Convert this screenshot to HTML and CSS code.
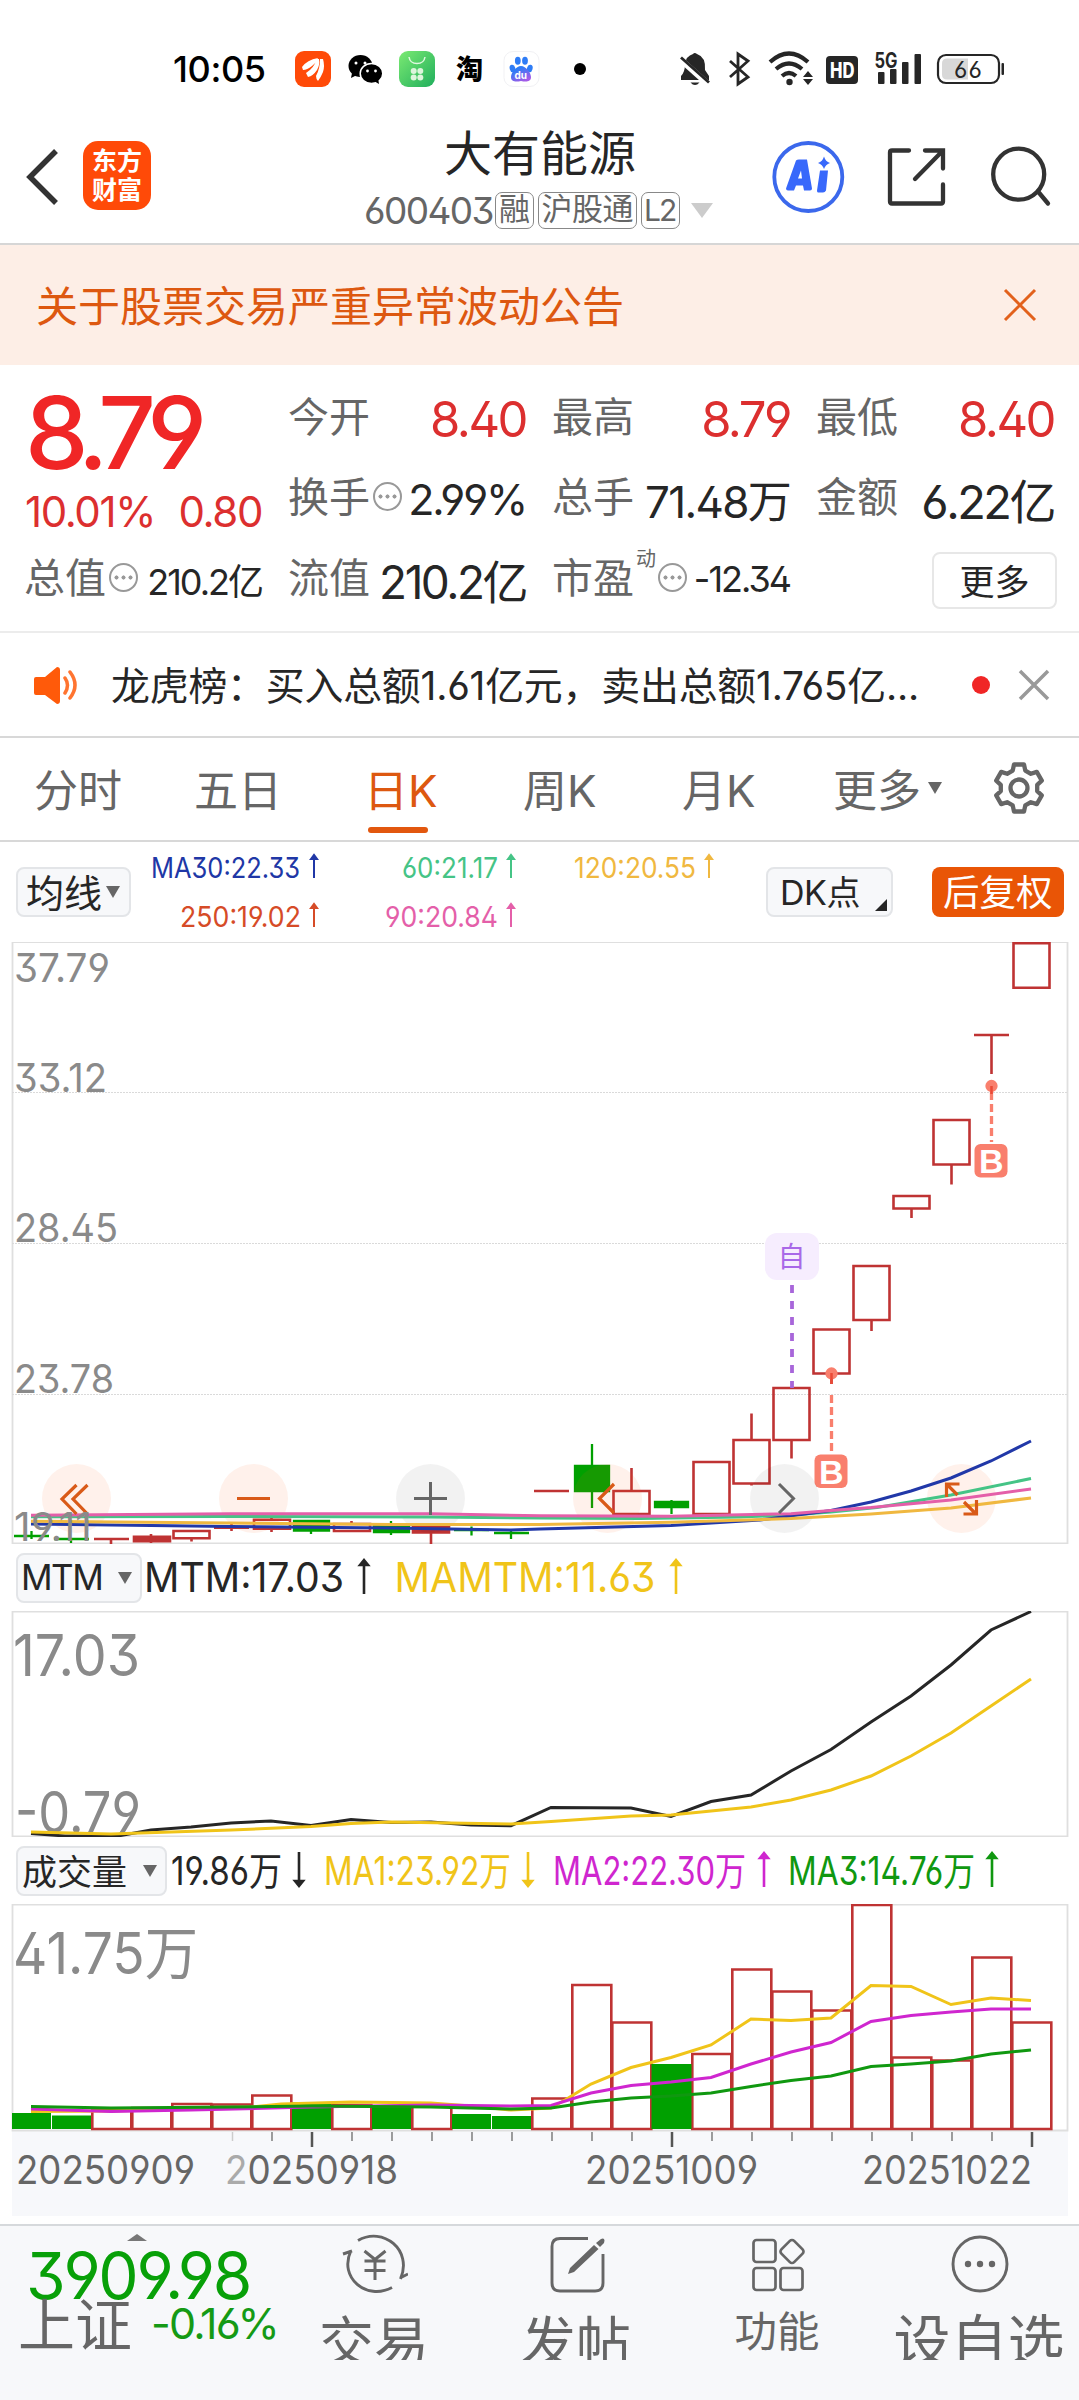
FILE: index.html
```html
<!DOCTYPE html>
<html lang="zh-CN">
<head>
<meta charset="utf-8">
<title>大有能源 600403</title>
<link rel="stylesheet" href="styles.css">
</head>
<body>
<div class="status-bar">
  <span class="clock">10:05</span>
  <svg class="status-apps" width="310" height="48" viewBox="290 45 310 48">
    <defs>
      <linearGradient id="green" x1="0" y1="0" x2="1" y2="1"><stop offset="0" stop-color="#7bea72"/><stop offset="1" stop-color="#1fae5c"/></linearGradient>
      <linearGradient id="paw" x1="0" y1="0" x2="0.6" y2="1"><stop offset="0.3" stop-color="#2e7cf6"/><stop offset="1" stop-color="#a35be8"/></linearGradient>
    </defs>
    <rect x="295" y="51" width="36" height="36" rx="9" fill="#ff4a08"/>
    <path d="M302 67q5-7 16-9-2 5-6 8-5 4-9 4zM306 73q8-5 11-14l2 0q1 6-2 11-4 6-9 7zM318 81q-2-2-2-5 4-7 4-17l3 0q2 7 0 13-2 5-5 9z" fill="#fff"/>
    <ellipse cx="360.500" cy="66" rx="12" ry="11" fill="#000"/><path d="M352 73l-1 5 6-3z" fill="#000"/>
    <ellipse cx="371.500" cy="73.500" rx="11.300" ry="10" fill="#000" stroke="#fff" stroke-width="1.500"/><path d="M374 81l5 3-1-6z" fill="#000"/>
    <g fill="#fff"><circle cx="356" cy="63" r="1.500"/><circle cx="365" cy="63" r="1.500"/><circle cx="367.500" cy="71" r="1.400"/><circle cx="375.500" cy="71" r="1.400"/></g>
    <rect x="399" y="51" width="36" height="36" rx="9" fill="url(#green)"/>
    <path d="M409 57q1 6.500 8 6.500t8-6.500" fill="none" stroke="#dff8df" stroke-width="1.500"/>
    <g fill="#dcf5dc"><circle cx="413.700" cy="71" r="3"/><circle cx="420.300" cy="71" r="3"/><circle cx="413.700" cy="77.500" r="3"/><circle cx="420.300" cy="77.500" r="3"/></g>
    <text x="456" y="78.500" font-size="27" font-weight="900" textLength="27">淘</text>
    <rect x="504" y="51.500" width="35" height="35" rx="9" fill="#fff" stroke="#f1f1f4"/>
    <g fill="#2e7cf6"><ellipse cx="512.500" cy="68.500" rx="2.800" ry="3.800" transform="rotate(-15 512.500 68.500)"/><ellipse cx="517.800" cy="60.800" rx="2.900" ry="4"/><ellipse cx="525" cy="60.800" rx="2.900" ry="4"/><ellipse cx="529.800" cy="68.500" rx="2.800" ry="3.800" transform="rotate(15 529.800 68.500)"/></g>
    <path d="M521 66c5 0 10 7 10 11 0 5-5 5-10 4-5 1-10 1-10-4 0-4 5-11 10-11z" fill="url(#paw)"/>
    <text x="514.500" y="79" font-size="10" font-weight="700" fill="#fff">du</text>
    <circle cx="580" cy="69" r="6" fill="#000"/>
  </svg>
  <svg class="status-signals" width="335" height="48" viewBox="675 45 335 48" fill="#262626">
    <path d="M693 54q1.500-2 4 0 9 3 8 16l4 6v4h-28v-4q4-4 4-12 1-8 8-10z"/><path d="M690.500 82.500h9q-4.500 5-9 0z"/>
    <path d="M680 59l29 26" stroke="#fff" stroke-width="6"/><path d="M681 57.500l28 25" stroke="#262626" stroke-width="2.800"/>
    <path d="M730 61l18 16-10 7V54l10 7-18 16" fill="none" stroke="#262626" stroke-width="2.800"/>
    <g fill="none" stroke="#262626" stroke-width="4.200"><path d="M770 62q19-17 38 0"/><path d="M776 69q13-11 26 0"/><path d="M782 76q7-6 14 0"/></g>
    <circle cx="789.500" cy="82" r="3.200"/><path d="M808 71l5 6h-10zM808 85l-5-6h10z"/>
    <rect x="826" y="56" width="32" height="28" rx="4"/><text x="830" y="77.500" font-size="21" font-weight="800" fill="#fff" textLength="24.500" lengthAdjust="spacingAndGlyphs">HD</text>
    <text x="874.500" y="67.500" font-size="21" font-weight="700" textLength="23" lengthAdjust="spacingAndGlyphs" fill="#262626">5G</text>
    <rect x="878" y="72" width="6.500" height="12" rx="1"/><rect x="890" y="69" width="6.500" height="15" rx="1"/><rect x="902" y="62" width="6.500" height="22" rx="1"/><rect x="914.500" y="54" width="6.500" height="30" rx="1"/>
    <rect x="938" y="55" width="61" height="28" rx="8" fill="#fff" stroke="#262626" stroke-width="2.200"/><path d="M947 58.500h21v21h-21q-5 0-5-5v-11q0-5 5-5z" fill="#d8d8d8"/><rect x="1001.500" y="63" width="2.500" height="12" rx="1"/>
    <text x="954" y="78" font-size="23" font-weight="400" textLength="28">66</text>
  </svg>
</div>

<header class="header">
  <svg class="back" width="36" height="60" viewBox="25 147 36 60"><path d="M56 152L30 178 56 204" fill="none" stroke="#333" stroke-width="5.500"/></svg>
  <div class="logo">东方<br>财富</div>
  <div class="title">
    <h1>大有能源</h1>
    <div class="code"><span class="code-number">600403</span><span class="tag">融</span><span class="tag">沪股通</span><span class="tag latin">L2</span><i class="triangle light"></i></div>
  </div>
  <svg class="header-icons" width="290" height="80" viewBox="770 136.500 290 80" fill="none">
    <circle cx="808.300" cy="177.500" r="34" stroke="#3b68ec" stroke-width="3.800"/>
    <path d="M786 189l10-28q1-1 3-1h8l5 29q0 2-2 2h-6l-1-5h-7l-2 5h-6q-2 0-2-2zM798 179h4l-1-8zM820 171h8l-2 20q-1 2-3 2h-5q-1 0-1-2z" fill="#3868fb" fill-rule="evenodd"/>
    <path d="M824 157q1.500 5 6 6.500-4.500 1.500-6 6-1.500-4.500-6-6 4.500-1.500 6-6.500z" fill="#3868fb"/>
    <g stroke="#333" stroke-width="4.300" stroke-linecap="round"><path d="M909 151h-17q-2 0-2 2v49q0 2 2 2h49q2 0 2-2v-17M925 151h18v18M942 152l-27 27.500"/><circle cx="1018.700" cy="174.700" r="25.500"/><path d="M1038 192l10 12"/></g>
  </svg>
</header>

<div class="banner"><span>关于股票交易严重异常波动公告</span>
  <svg width="34" height="34" viewBox="0 0 34 34"><path d="M2 2l30 30M32 2L2 32" stroke="#e2611c" stroke-width="3"/></svg>
</div>

<section class="quote">
  <div class="price-block">
    <div class="price">8.79</div>
    <div class="change"><span>10.01%</span><span>0.80</span></div>
  </div>
  <div class="cell"><label>今开</label><b class="up">8.40</b></div>
  <div class="cell"><label>最高</label><b class="up">8.79</b></div>
  <div class="cell"><label>最低</label><b class="up">8.40</b></div>
  <div class="cell"><label>换手</label><i class="info"></i><b class="size-43">2.99%</b></div>
  <div class="cell"><label>总手</label><b class="size-44">71.48万</b></div>
  <div class="cell"><label>金额</label><b class="size-47">6.22亿</b></div>
  <div class="cell"><label>总值</label><i class="info"></i><b class="size-36">210.2亿</b></div>
  <div class="cell"><label>流值</label><b class="size-46">210.2亿</b></div>
  <div class="cell"><label>市盈<sup>动</sup></label><i class="info shifted"></i><b class="size-36">-12.34</b></div>
  <div class="cell cell-more"><button class="more">更多</button></div>
</section>

<div class="news">
  <svg width="46" height="40" viewBox="0 0 46 40"><path d="M2 12h9L23 2q3 0 3 3v31q0 3-3 3L11 30H2q-2 0-2-2V14q0-2 2-2z" fill="#ff5a0a"/><path d="M31 13q5 7 0 15M36 7q10 13 0 26" fill="none" stroke="#ff7430" stroke-width="3.500" stroke-linecap="round"/></svg>
  <span class="news-text">龙虎榜：买入总额1.61亿元，卖出总额1.765亿...</span>
  <i class="dot"></i>
  <svg width="32" height="32" viewBox="0 0 32 32"><path d="M2 2l28 28M30 2L2 30" stroke="#999" stroke-width="3.500"/></svg>
</div>

<nav class="tabs">
  <span class="tab">分时</span><span class="tab">五日</span><span class="tab active">日K</span><span class="tab">周K</span><span class="tab">月K</span><span class="tab">更多<i class="triangle small"></i></span>
  <svg class="gear" width="56" height="56" viewBox="-28 -28 56 56" fill="none" stroke="#666" stroke-width="4.300" stroke-linejoin="round"><path d="M-5-23.500H5L6.300-17.400 11.900-14.200 17.800-16.100 22.800-7.400 18.200-3.200V3.200L22.800 7.400 17.800 16.100 11.900 14.200 6.300 17.400 5 23.500H-5L-6.300 17.400-11.900 14.200-17.800 16.100-22.800 7.400-18.200 3.200V-3.200L-22.800-7.400-17.800-16.100-11.900-14.200-6.300-17.400Z"/><circle r="8.500"/></svg>
</nav>

<div class="ma-row">
  <button class="chip chip-ma"><span>均线</span><i class="triangle small"></i></button>
  <svg class="ma-legend" width="580" height="100" viewBox="146 842 580 100" font-size="29">
    <g fill="#2037a6" stroke="#2037a6"><text x="151" y="878" textLength="149" lengthAdjust="spacingAndGlyphs">MA30:22.33</text><path class="arrow" d="M314 878v-22m-3 3l3-4 3 4z"/></g>
    <g fill="#45c486" stroke="#45c486"><text x="402" y="878" textLength="96" lengthAdjust="spacingAndGlyphs">60:21.17</text><path class="arrow" d="M511 878v-22m-3 3l3-4 3 4z"/></g>
    <g fill="#f0b840" stroke="#f0b840"><text x="574" y="878" textLength="122" lengthAdjust="spacingAndGlyphs">120:20.55</text><path class="arrow" d="M709 878v-22m-3 3l3-4 3 4z"/></g>
    <g fill="#d64b27" stroke="#d64b27"><text x="180" y="927" textLength="121" lengthAdjust="spacingAndGlyphs">250:19.02</text><path class="arrow" d="M314 927v-22m-3 3l3-4 3 4z"/></g>
    <g fill="#e45fa9" stroke="#e45fa9"><text x="385" y="927" textLength="113" lengthAdjust="spacingAndGlyphs">90:20.84</text><path class="arrow" d="M511 927v-22m-3 3l3-4 3 4z"/></g>
  </svg>
  <button class="chip chip-dk"><span>DK点</span><i class="corner"></i></button>
  <button class="chip chip-adjust"><span>后复权</span></button>
</div>

<svg class="chart" width="1079" height="602" viewBox="0 942 1079 602">
  <path class="frame" d="M12.500 942H1067.500V1543.500H12.500Z"/>
  <path d="M12 1092.500H1067M12 1243.500H1067M12 1394.500H1067" stroke="#dadada" stroke-dasharray="2 1"/>
  <g fill="#8a8a8a" font-size="39">
    <text x="14" y="982" textLength="96" lengthAdjust="spacingAndGlyphs">37.79</text><text x="14" y="1092" textLength="93" lengthAdjust="spacingAndGlyphs">33.12</text><text x="14" y="1242" textLength="104" lengthAdjust="spacingAndGlyphs">28.45</text><text x="14" y="1393" textLength="100" lengthAdjust="spacingAndGlyphs">23.78</text>
  </g>
  <g class="candle-up">
    <path d="M94 1539h35M111 1539v6"/><path d="M134 1536.700h36v4.600h-36zM151 1534v9" fill="#bf3333"/><path d="M173.500 1531h36v7.300h-36zM191.500 1538v3.500"/>
    <path d="M214 1527.700h35M231.500 1524v7"/><path d="M254 1519.700h36v9h-36zM271.500 1518v2M271.500 1529v3"/><path d="M334 1524h36v7h-36zM351.500 1521v3"/><path d="M413 1526.500h36v6h-36z" fill="#bf3333"/><path d="M431 1532v13"/>
    <path d="M534 1491h35"/><path d="M613.500 1491h36v23h-36zM631.500 1468v23M631.500 1514v5"/><path d="M693.500 1462h36v52h-36z"/><path d="M733.500 1440h36v43.500h-36zM751.500 1413.500V1440M751.500 1483v2.500"/><path d="M773.500 1388h36v52h-36zM791.500 1440v18.500"/><path d="M813.500 1329.500h36v44h-36zM831.500 1373.500v10.500"/><path d="M853.500 1266h36v54h-36zM871.500 1320v11"/><path d="M893.500 1196h36v12.500h-36zM911.500 1208v10"/><path d="M933.500 1120h36v44.500h-36zM951.500 1164v20.500"/><path d="M974 1035h35M991.500 1035v39"/><path d="M1013.500 943.200h36v44.500h-36z"/>
  </g>
  <g stroke="#00a000" stroke-width="2.300" fill="#00a000"><path d="M14 1536h35M31.500 1531v8M54 1539h35M71 1538v5M294 1521h35v9.500h-35zM311 1520v14M374 1525h35v7h-35zM391 1521v14M454 1530h35M471.500 1526.500v9M494 1533h35M511 1531v8M575 1466h34v25h-34zM592 1444v64M655 1502h33v5h-33zM671.500 1500v14"/></g>
  <g stroke="#f97f6d" stroke-width="3.300" fill="#f97f6d"><path d="M991.500 1092v50M831.500 1395v60" stroke-dasharray="8 4"/><circle cx="991.500" cy="1086" r="4.500"/><circle cx="831.500" cy="1373.500" r="4.500"/></g>
  <path d="M991.500 1086v8M831.500 1373v11" stroke="#ea4a36" stroke-width="2.500"/>
  <path d="M792 1285v103" stroke="#a866da" stroke-width="3.800" stroke-dasharray="8 8"/>
  <rect x="765" y="1233" width="54" height="47" rx="12" fill="#f6edfe"/><text x="777.500" y="1267" font-size="28" fill="#a968e8">自</text>
  <g fill="#f97f6d"><rect x="974.500" y="1144" width="33" height="33.500" rx="6"/><rect x="814.500" y="1454.500" width="33" height="33.500" rx="6"/></g>
  <g font-family="Liberation Sans" font-size="34" font-weight="700" fill="#fff"><text x="979" y="1173">B</text><text x="819" y="1483.500">B</text></g>
  <g fill="#ff5a14" fill-opacity=".085"><circle cx="76.500" cy="1498.500" r="34.500"/><circle cx="253.500" cy="1498.500" r="34.500"/><circle cx="607.500" cy="1498.500" r="34.500"/><circle cx="961.500" cy="1498.500" r="34.500"/></g>
  <g fill="#000" fill-opacity=".05"><circle cx="430.500" cy="1498.500" r="34.500"/><circle cx="784.500" cy="1498.500" r="34.500"/></g>
  <g fill="none" stroke-width="3">
    <path d="M31 1516.800L231 1516.500 431 1517 540 1518 640 1518.500 740 1517 791 1515 831 1512 877 1507.500 951 1495 1031 1478.500" stroke="#45c486"/>
    <path d="M31 1524L231 1526.500 391 1528 511 1530 540 1529 671 1525.500 760 1520 831 1510.500 871 1502 911 1491 951 1478 991 1461 1031 1441" stroke="#2138a8"/>
    <path d="M31 1521.300L231 1523 391 1524.500 540 1524.500 671 1522.300 791 1518.600 871 1514 951 1508 1031 1498" stroke="#f0b840"/>
    <path d="M31 1515.300L231 1513.800 431 1513.800 540 1515.700 671 1516.300 791 1513.700 831 1510.400 871 1507.600 951 1500 1031 1489" stroke="#e45fa9"/>
  </g>
  <g fill="none" stroke="#d95a18" stroke-width="3.200"><path d="M76.500 1485l-14.500 14 14.500 15M87.500 1485l-14.500 14 14.500 15M237 1498.500h33M614 1484l-14.500 14.500L614 1513M959.500 1484h-13v13M946.500 1484l11 11M964 1502l12 12M976.500 1500v14h-13"/></g>
  <path d="M414 1498.500h33M430.500 1482v33M779 1484l14.500 14.500L779 1513" fill="none" stroke="#666" stroke-width="3"/>
  <text x="14" y="1541" font-size="39" fill="#8a8a8a" textLength="78" lengthAdjust="spacingAndGlyphs">19.11</text>
</svg>

<div class="indicator-row">
  <button class="chip chip-mtm"><span>MTM</span><i class="triangle small"></i></button>
  <svg class="legend" width="920" height="67" viewBox="141 1544 920 67" font-size="41">
    <g fill="#262626" stroke="#262626"><text x="143" y="1592" textLength="200" lengthAdjust="spacingAndGlyphs">MTM:17.03</text><path class="arrow big" d="M363 1594v-33m-4 4l4-5 4 5z"/></g>
    <g fill="#f0c419" stroke="#f0c419"><text x="393.500" y="1592" textLength="261" lengthAdjust="spacingAndGlyphs">MAMTM:11.63</text><path class="arrow big" d="M675 1594v-33m-4 4l4-5 4 5z"/></g>
  </svg>
</div>

<svg class="chart" width="1079" height="226" viewBox="0 1611 1079 226">
  <path class="frame" d="M12.500 1611.500H1067.500V1836.500H12.500Z"/>
  <g fill="#8a8a8a" font-size="57"><text x="13" y="1676" textLength="127" lengthAdjust="spacingAndGlyphs">17.03</text><text x="15" y="1833" textLength="126" lengthAdjust="spacingAndGlyphs">-0.79</text></g>
  <g fill="none" stroke-width="3">
    <path d="M31 1833.500L65 1836 118 1836 151 1830 191 1827 231 1823 271 1821 311 1825.500 351 1819.500 391 1822.500 431 1822 471 1825 511 1825.700 551 1807.500 631 1808 671 1816.500 711 1801.500 751 1795 791 1771 831 1749.500 871 1722 911 1696 951 1665 991 1630 1031 1611.500" stroke="#262626"/>
    <path d="M31 1832L111 1834 231 1830 311 1826.500 351 1823.500 391 1822 511 1824 551 1821.500 631 1816 671 1815 711 1811 751 1807 791 1800 831 1790 871 1776 911 1756 951 1733 991 1706 1031 1679" stroke="#f0c419"/>
  </g>
</svg>

<div class="indicator-row">
  <button class="chip chip-volume"><span>成交量</span><i class="triangle small"></i></button>
  <svg class="legend" width="880" height="67" viewBox="167 1837 880 67" font-size="39">
    <g fill="#262626" stroke="#262626"><text x="171" y="1885" textLength="111" lengthAdjust="spacingAndGlyphs">19.86万</text><path class="arrow big" d="M299 1852v33m-4-4l4 5 4-5z"/></g>
    <g fill="#f0c419" stroke="#f0c419"><text x="324" y="1885" textLength="187" lengthAdjust="spacingAndGlyphs">MA1:23.92万</text><path class="arrow big" d="M528 1852v33m-4-4l4 5 4-5z"/></g>
    <g fill="#cf26cf" stroke="#cf26cf"><text x="553" y="1885" textLength="193" lengthAdjust="spacingAndGlyphs">MA2:22.30万</text><path class="arrow big" d="M764 1887v-33m-4 4l4-5 4 5z"/></g>
    <g fill="#109810" stroke="#109810"><text x="788" y="1885" textLength="187" lengthAdjust="spacingAndGlyphs">MA3:14.76万</text><path class="arrow big" d="M992 1887v-33m-4 4l4-5 4 5z"/></g>
  </svg>
</div>

<svg class="chart" width="1079" height="312" viewBox="0 1904 1079 312">
  <rect x="12" y="2131" width="1056" height="85" fill="#f7f8fb"/>
  <path class="frame" d="M12.500 1904.500H1067.500V2130.500H12.500Z"/>
  <text x="13" y="1974" font-size="57" fill="#8a8a8a" textLength="185" lengthAdjust="spacingAndGlyphs">41.75万</text>
  <path class="candle-up" d="M92.300 2109.500h39v19.500h-39zM132.300 2108h39v21h-39zM172.300 2104h39v25h-39zM212.300 2104.500h39v24.500h-39zM252.300 2095.500h39v33.500h-39zM332.300 2105h39v24h-39zM412.300 2105.500h39v23.500h-39zM532.300 2098.500h39v30.500h-39zM572.300 1985h39v144h-39zM612.300 2022.500h39v106.500h-39zM692.300 2054h39v75h-39zM732.300 1969.500h39v159.500h-39zM772.300 1991.500h39v137.500h-39zM812.300 2010.500h39v118.500h-39zM852.300 1905h39v224h-39zM892.300 2057.500h39v71.500h-39zM932.300 2060.500h39v68.500h-39zM972.300 1957.500h39v171.500h-39zM1012.300 2022.500h39v106.500h-39z"/>
  <path d="M12 2113h39v16H12zM52 2115.500h39v13.500h-39zM292 2102.500h39v26.500h-39zM372 2106h39v23h-39zM452 2114h39v15h-39zM492 2116h39v13h-39zM651.500 2064h40v65h-40z" fill="#00a000"/>
  <g fill="none" stroke-width="3">
    <path d="M31 2111.500L111 2111 191 2109 251 2107 281 2104 351 2102 431 2103 471 2106 511 2110 551 2108 565 2100 591 2084 631 2067.500 671 2057.500 711 2045 751 2019 791 2020.500 831 2018 871 1985.500 911 1986.500 951 2004.500 991 1998 1031 2000.500" stroke="#f0c419"/>
    <path d="M31 2109L111 2111.500 191 2110 311 2107 431 2105 511 2106 551 2105.500 591 2093 631 2085.500 671 2082 711 2077.500 751 2064 791 2052 831 2042.500 871 2021.500 911 2015.500 951 2012 991 2009 1031 2009" stroke="#cf26cf"/>
    <path d="M31 2106.500L111 2108 231 2107 311 2106 431 2107 511 2109 551 2108 591 2102 631 2098 671 2096 711 2093 751 2086.500 791 2080.500 831 2076 871 2066.500 911 2064 951 2061 991 2054 1031 2050" stroke="#109810"/>
  </g>
  <path d="M232.500 2132v9" stroke="#ccc" stroke-width="1.500"/>
  <path d="M272 2132v9m80-9v9m40-9v9m40-9v9m40-9v9m40-9v9m40-9v9m40-9v9m40-9v9m80-9v9m40-9v9m40-9v9m40-9v9m40-9v9m40-9v9m40-9v9m40-9v9" stroke="#8c8c8c" stroke-width="1.700"/>
  <path d="M312 2132v15m360-15v15m360-15v15" stroke="#555" stroke-width="2.500"/>
  <g fill="#666" font-size="39"><text x="16" y="2183.500" textLength="179" lengthAdjust="spacingAndGlyphs">20250909</text><text x="225" y="2183.500" textLength="173" lengthAdjust="spacingAndGlyphs"><tspan fill="#aaa">2</tspan>0250918</text><text x="585" y="2183.500" textLength="173" lengthAdjust="spacingAndGlyphs">20251009</text><text x="862" y="2183.500" textLength="170" lengthAdjust="spacingAndGlyphs">20251022</text></g>
</svg>

<footer class="bottom-bar">
  <div class="index">
    <i class="triangle upward"></i>
    <div class="index-value">3909.98</div>
    <div class="index-line"><span class="index-name">上证</span><span class="index-change">-0.16%</span></div>
  </div>
  <div class="action"><svg width="66" height="60" viewBox="-33 -30 66 60" fill="none" stroke="#666" stroke-width="2.900"><path d="M-17-23.500C8-38 38-14 25.500 15M25 14l8-4M17 23.500C-8 37-37 14-24-13.500M-32-10l9-3"/><path d="M-10.500-13L0-4.500 10.500-13M-10.500-3h21M-10.500 6.500h21M0-4V16" stroke-width="3"/></svg><span>交易</span></div>
  <div class="action"><svg width="60" height="60" viewBox="-30 -30 60 60" fill="none"><path d="M11-25.500H-17q-8 0-8 8V19q0 8 8 8H18q8 0 8-8V-10" stroke="#666" stroke-width="2.900"/><path d="M-9 10l2-6L17-19l4.500 4L-3 8zM19-21l5-4q2-1 3 0t0 4l-4 4z" fill="#666"/></svg><span>发帖</span></div>
  <div class="action small-text"><svg width="60" height="60" viewBox="-30 -30 60 60" fill="none" stroke="#666" stroke-width="2.700"><rect x="-24.500" y="-24" width="22" height="22" rx="3"/><rect x="-24.500" y="4" width="22" height="22" rx="3"/><rect x="2.500" y="4" width="22" height="22" rx="3"/><rect x="5" y="-21.500" width="18" height="18" rx="3" transform="rotate(45 14 -12.500)"/></svg><span>功能</span></div>
  <div class="action wide"><svg width="60" height="60" viewBox="-30 -30 60 60"><circle r="27" fill="none" stroke="#666" stroke-width="2.900"/><g fill="#666"><circle cx="-12" r="3.200"/><circle r="3.200"/><circle cx="12" r="3.200"/></g></svg><span>设自选</span></div>
</footer>
</body>
</html>
```

FILE: styles.css
```css
* { box-sizing: border-box; }
body {
  margin: 0;
  width: 1079px;
  height: 2400px;
  overflow: hidden;
  background: #fff;
  color: #262626;
  font-family: Inter, "Noto Sans CJK SC", sans-serif;
  font-feature-settings: "ss01", "cv09";
  font-weight: 400;
}
svg { display: block; flex: none; }
svg text { stroke: none; }
button { font: inherit; color: inherit; margin: 0; padding: 0; }
h1 { margin: 0; font-weight: 400; }
.triangle { display: inline-block; flex: none; border-style: solid; border-color: #666 transparent; border-width: 12px 7.5px 0; }
.triangle.light { border-color: #ccc transparent; border-width: 15px 11px 0; }
.triangle.upward { border-color: #777 transparent; border-width: 0 10.5px 7px; }
.arrow { stroke-width: 2; }
.arrow.big { stroke-width: 2.600; }
.frame { fill: none; stroke: #dfdfdf; stroke-width: 1.800; }
.candle-up { fill: none; stroke: #bf3333; stroke-width: 2.600; }

.status-bar { height: 123px; padding: 45px 69px 0 173px; display: flex; }
.clock { width: 117px; line-height: 49px; font-size: 36px; font-weight: 500; color: #000; letter-spacing: -.4px; }
.status-signals { margin-left: auto; }

.header { height: 122px; padding: 0 19px 15px 25px; border-bottom: 2px solid #d6d6d6; display: flex; align-items: center; }
.logo { width: 68px; height: 69px; margin-left: 22px; padding-top: 6px; border-radius: 15px; background: #ff4a08; color: #fff; font-size: 25px; line-height: 29px; font-weight: 700; text-align: center; }
.title { width: 400px; margin-left: 213px; margin-top: 9px; }
.title h1 { font-size: 48px; line-height: 62px; padding-left: 80px; }
.code { display: flex; align-items: center; height: 54px; font-size: 37px; color: #666; margin-top: -2px; }
.code-number { width: 131px; letter-spacing: -1.600px; }
.tag { border: 1.500px solid #888; border-radius: 7px; height: 37px; padding: 0 3px; margin-right: 4px; font-size: 31px; line-height: 31px; letter-spacing: -.5px; }
.tag.latin { width: 39px; padding: 0 2px; line-height: 34px; letter-spacing: -2px; font-size: 30px; }
.triangle.light { margin-left: 7px; }
.header-icons { margin-left: auto; }

.banner { height: 120px; padding: 0 42px 0 36px; background: #fdeee6; color: #dd5810; font-size: 42px; display: flex; align-items: center; justify-content: space-between; }
.banner span { padding-bottom: 3px; }

.quote { height: 268px; padding: 14px 26px 0 25px; display: grid; grid-template-columns: repeat(4, 237px); grid-auto-rows: 80.5px; column-gap: 27px; border-bottom: 2px solid #ececec; }
.price-block { grid-row: span 2; color: #f02626; }
.price { font-size: 101px; line-height: 106px; font-weight: 550; letter-spacing: -8.500px; }
.change { display: flex; justify-content: space-between; font-size: 42px; line-height: 54px; letter-spacing: -1.400px; color: #dc2f2f; white-space: nowrap; }
.cell { display: flex; align-items: center; white-space: nowrap; }
.cell label { position: relative; font-size: 41px; line-height: 54px; padding-bottom: 5px; margin-left: -1px; color: #666; }
.cell sup { position: absolute; left: 84px; top: -2px; font-size: 20px; line-height: 20px; }
.cell b { margin-left: auto; padding-bottom: 2px; font-size: 49px; font-weight: 400; letter-spacing: -2.500px; }
.cell .up { color: #dc2f2f; padding-bottom: 0; }
.cell .size-47 { font-size: 47px; }
.cell .size-46 { font-size: 46px; }
.cell .size-44 { font-size: 44px; letter-spacing: -1.700px; }
.cell .size-43 { font-size: 43px; letter-spacing: -2.200px; }
.cell .size-36 { font-size: 36px; letter-spacing: -2px; }
.info { width: 29px; height: 29px; margin: 0 0 6px 3px; border: 2px solid #999; border-radius: 50%; background: radial-gradient(circle, #999 1.800px, transparent 2.300px) center / 7px 25px no-repeat, radial-gradient(circle, #999 1.800px, transparent 2.300px) 2px center / 7px 25px no-repeat, radial-gradient(circle, #999 1.800px, transparent 2.300px) 16px center / 7px 25px no-repeat; }
.info.shifted { margin-left: 24px; }
.cell-more { justify-content: flex-end; }
.more { width: 125px; height: 57px; margin-right: -3px; padding-bottom: 4px; border: 2px solid #e7e7e7; border-radius: 8px; background: #fff; font-size: 35px; }

.news { height: 105px; padding: 0 29px 0 34px; border-bottom: 2px solid #d8d8d8; display: flex; align-items: center; }
.news-text { width: 834px; margin-left: 31px; padding-bottom: 4px; font-size: 38.900px; white-space: nowrap; letter-spacing: -.200px; }
.dot { width: 18px; height: 18px; margin: 0 28px 0 27px; border-radius: 50%; background: #f02626; }

.tabs { height: 104px; padding: 0 32px 2px 34px; border-bottom: 2px solid #d8d8d8; display: flex; align-items: center; font-size: 44px; color: #666; }
.tab { position: relative; white-space: nowrap; }
.tab:nth-child(1), .tab:nth-child(2) { width: 160px; }
.tab:nth-child(3) { width: 157px; padding-left: 10px; }
.tab:nth-child(4) { width: 158px; padding-left: 12px; }
.tab:nth-child(5) { width: 154px; padding-left: 13px; }
.tab:nth-child(6) { padding-left: 10px; }
.tab.active { color: #dd5810; }
.tab.active::after { content: ""; position: absolute; left: 14px; bottom: -13px; width: 60px; height: 6px; border-radius: 3px; background: #e2570e; }
.tab .triangle { margin-left: 7px; vertical-align: 13px; }
.gear { margin-left: auto; }

.chip { display: flex; align-items: center; flex: none; height: 50px; border: 2px solid #e3e5e8; border-radius: 8px; background: #f7f8fa; white-space: nowrap; }
.chip span { padding-bottom: 3px; }
.ma-row { height: 100px; padding: 0 15px 0 16px; display: flex; align-items: center; }
.ma-row .chip { margin-bottom: 1px; }
.chip-ma { width: 115px; padding-left: 8px; font-size: 38px; }
.chip-ma .triangle { margin-left: 4px; }
.ma-legend { margin-left: 15px; }
.chip-dk { position: relative; width: 127px; margin-left: 40px; padding-left: 12px; font-size: 34px; letter-spacing: -.5px; }
.corner { position: absolute; right: 4px; bottom: 4px; border-style: solid; border-width: 0 0 12px 12px; border-color: transparent transparent #262626; }
.chip-adjust { width: 132px; margin-left: auto; padding-left: 11px; border: 0; background: #e95506; color: #fff; font-size: 36.500px; }

.indicator-row { height: 67px; padding-left: 16px; display: flex; align-items: center; }
.chip-mtm { width: 126px; padding: 0 8px 0 3px; justify-content: space-between; font-size: 35px; letter-spacing: -1.500px; }
.chip-mtm span { padding-bottom: 1px; }
.chip-volume { width: 151px; padding: 0 8px 0 4px; justify-content: space-between; font-size: 35px; }

.bottom-bar { height: 176px; margin-top: 8px; border-top: 2px solid #d6d9dc; background: #f7f8fa; display: flex; color: #666; }
.index { width: 290px; padding: 8px 0 0 20px; display: flex; flex-direction: column; }
.index .triangle { width: 0; margin-left: 107px; }
.index-value { margin-top: 3px; margin-left: 6px; font-size: 64px; line-height: 64px; letter-spacing: -2.300px; color: #08a008; }
.index-line { display: flex; align-items: flex-start; margin-top: -17px; white-space: nowrap; }
.index-name { margin-left: -2px; font-size: 57px; line-height: 70px; }
.index-change { margin-left: 19px; padding-top: 3px; font-size: 43px; line-height: 58px; letter-spacing: -1.800px; color: #159a15; }
.action { width: 170px; height: 134px; margin-right: 32px; overflow: hidden; display: flex; flex-direction: column; align-items: center; padding-top: 8px; font-size: 55px; }
.action span { line-height: 70px; margin: 13px 2px 0 0; white-space: nowrap; }
.action.small-text { font-size: 42.500px; width: 168px; margin-right: 23px; }
.action.small-text span { margin-top: 3px; }
.action.wide { width: 190px; margin-right: 0; font-size: 57px; }
```
